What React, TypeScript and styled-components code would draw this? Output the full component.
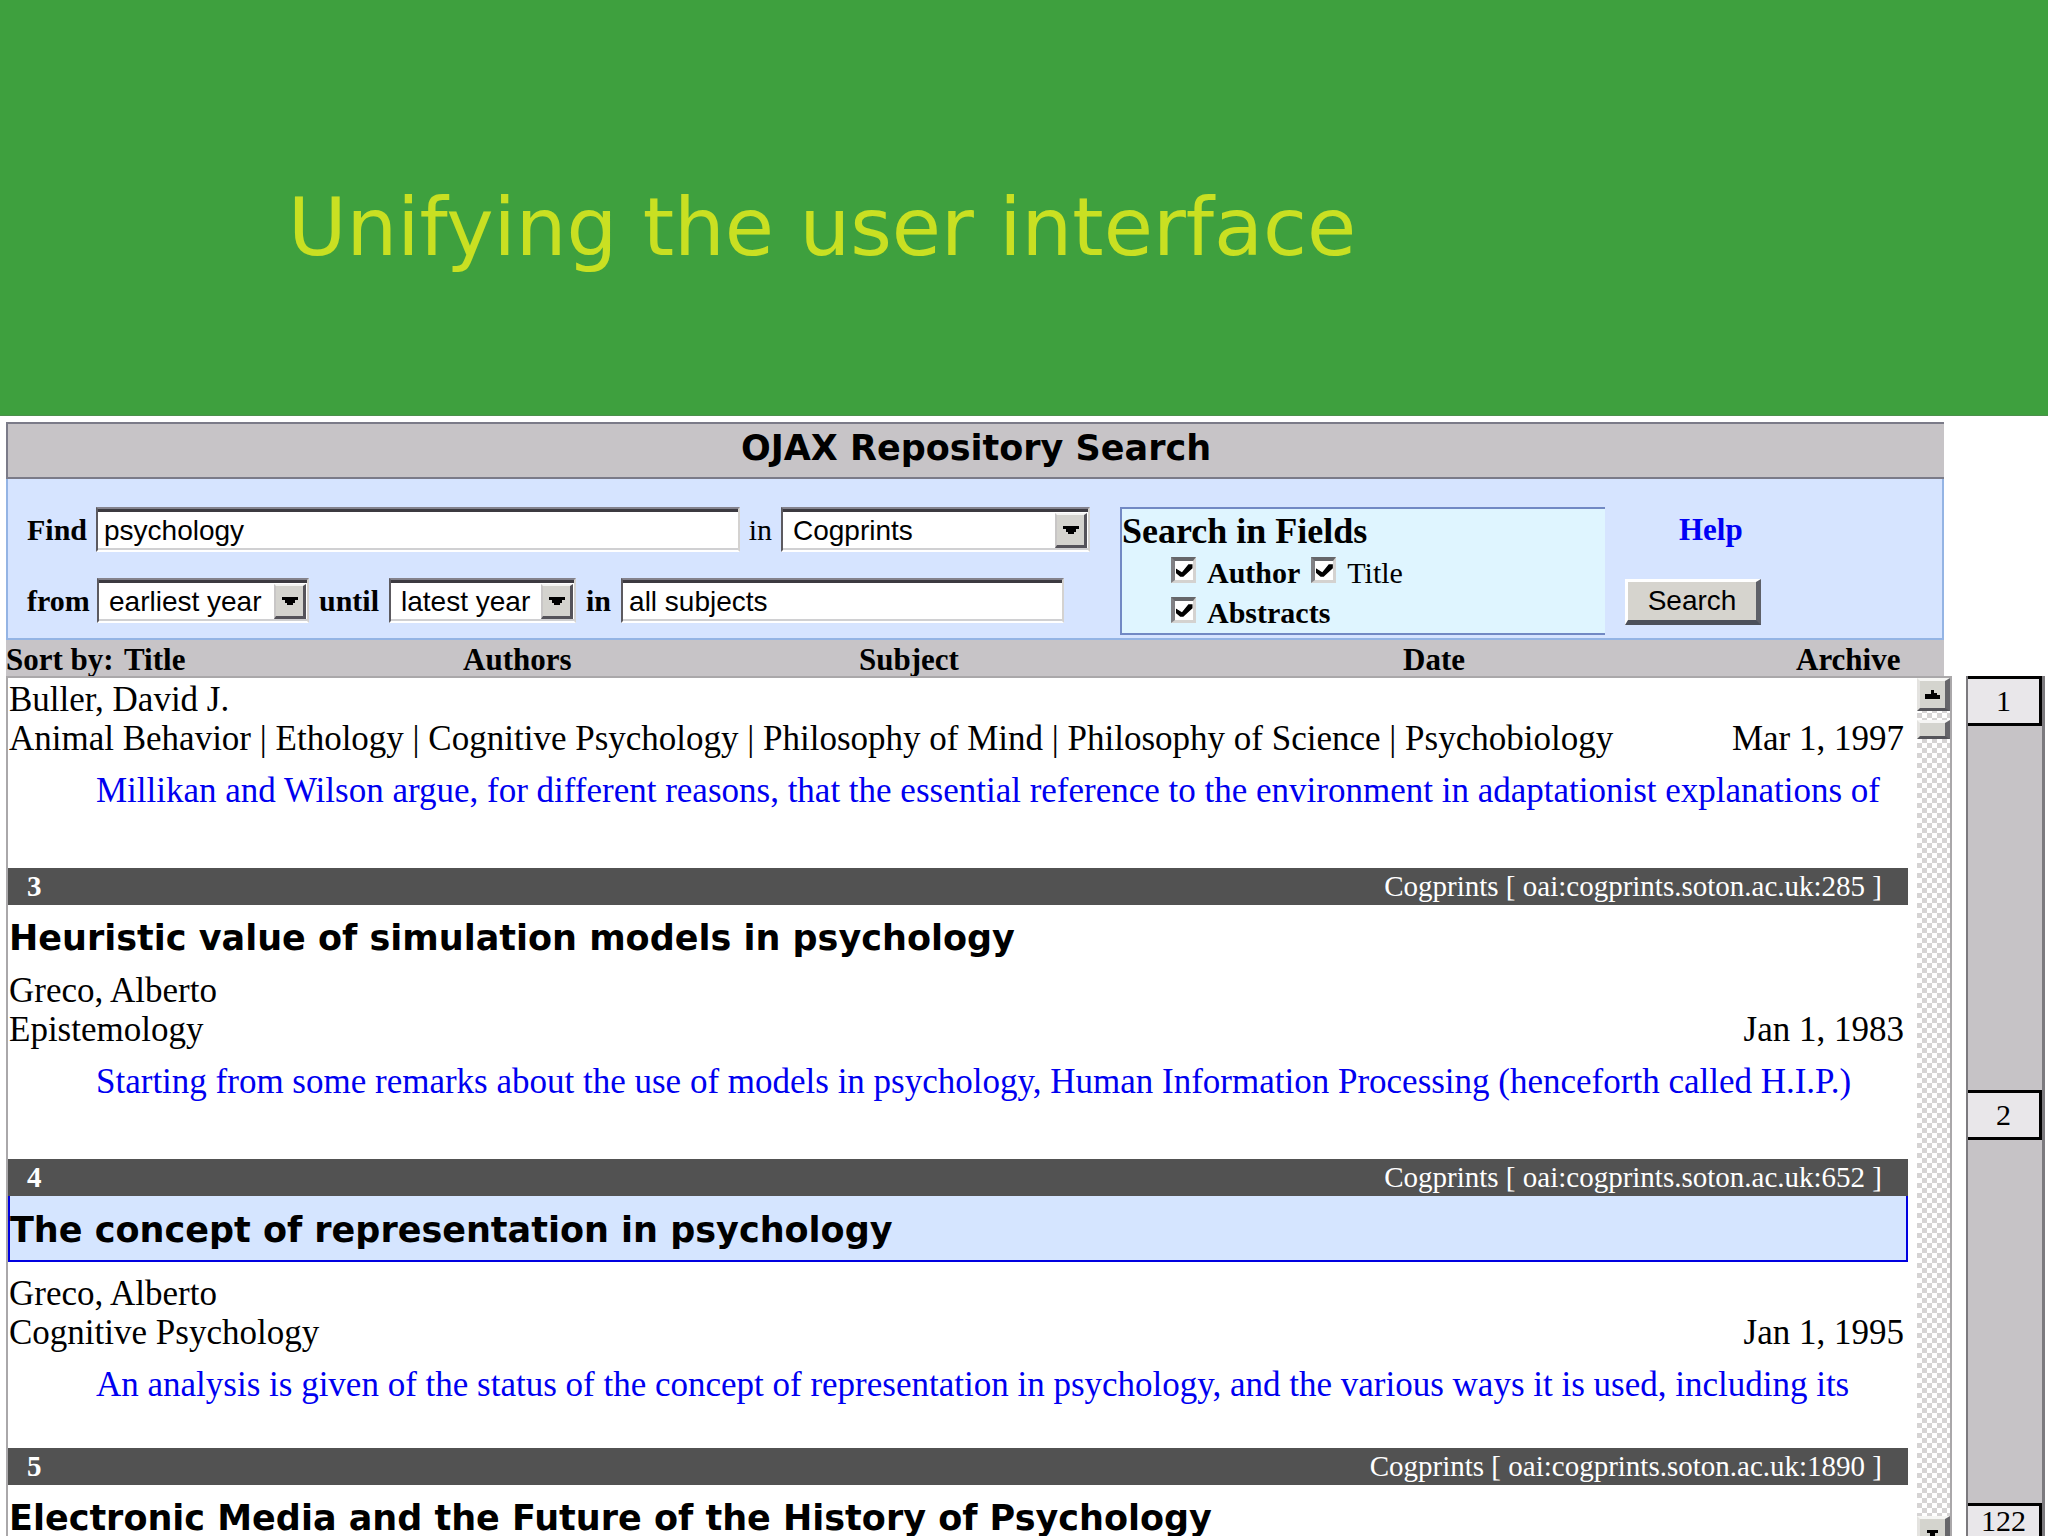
import React from 'react';
import styled, { createGlobalStyle, css } from 'styled-components';

const serif = '"Liberation Serif", "Times New Roman", serif';
const sans = '"Liberation Sans", Arial, sans-serif';
const wide = '"DejaVu Sans", Verdana, sans-serif';

const GlobalStyle = createGlobalStyle`
  *, *::before, *::after { box-sizing: border-box; }
  body { margin: 0; background: #fff; color: #000; font-family: ${serif}; }
  button, input, select { font: inherit; color: inherit; margin: 0; border-radius: 0; }
`;

const Page = styled.div`
  display: flex;
  flex-direction: column;
  height: 100vh;
  overflow: hidden;
`;

const Banner = styled.header`
  flex: none;
  height: 416px;
  padding: 176px 40px 0 288px;
  background: #3ea03e;
  border-bottom: 1px solid #4c8f4c;
`;

const BannerTitle = styled.h1`
  margin: 0;
  font: 400 80px/104px ${wide};
  color: #c9e022;
`;

const SearchArea = styled.section`
  flex: none;
  margin: 6px 104px 0 6px;
`;

const AppTitle = styled.h2`
  margin: 0;
  padding-bottom: 5px;
  border: solid #7b7b88;
  border-width: 2px 0 2px 2px;
  background: #c7c4c7;
  font: 700 35px/48px ${wide};
  text-align: center;
`;

const SearchForm = styled.form`
  display: flex;
  align-items: flex-start;
  padding-top: 28px;
  height: 161px;
  border: solid #94b4e4;
  border-width: 0 2px 2px;
  background: #d6e4ff;
`;

const Criteria = styled.div`
  flex: 1;
  display: flex;
  flex-direction: column;
  gap: 26px;
  padding: 0 30px 0 19px;
`;

const CriteriaRow = styled.div<{ $short?: boolean }>`
  display: flex;
  align-items: center;
  gap: ${(p) => (p.$short ? 10 : 9)}px;
  height: 45px;
  padding-right: ${(p) => (p.$short ? 26 : 0)}px;
`;

const Label = styled.label<{ $lead?: boolean; $light?: boolean }>`
  font-size: 30px;
  line-height: 40px;
  font-weight: ${(p) => (p.$light ? 400 : 700)};
  ${(p) => p.$lead && css`width: 60px;`}
`;

const sunken = css`
  height: 45px;
  border: 2px solid;
  border-color: #84828c #d4d2d0 #fff #5c5a60;
  background: #fff;
  box-shadow: inset 0 3px #3c3a40, inset 0 -2px #d0d0d2;
  font: 28px/36px ${sans};
  outline: none;
`;

const TextField = styled.input`
  ${sunken}
  flex: 1;
  min-width: 0;
  padding: 2px 6px 0;
`;

const SelectBox = styled.span<{ $width: number }>`
  position: relative;
  display: block;
  width: ${(p) => p.$width}px;
`;

const Select = styled.select`
  ${sunken}
  appearance: none;
  display: block;
  width: 100%;
  padding: 2px 36px 0 10px;
`;

const DropMark = styled.span`
  position: absolute;
  top: 6px;
  right: 3px;
  bottom: 4px;
  width: 32px;
  display: grid;
  place-items: center;
  border: solid;
  border-width: 2px 3px 3px 2px;
  border-color: #f4f4f2 #55535a #55535a #c8c6c6;
  background: #d4d3ce;
  pointer-events: none;
`;

const Fields = styled.fieldset`
  flex: none;
  width: 485px;
  margin: 0;
  padding: 0;
  border: solid #7289c4;
  border-width: 2px 0 2px 2px;
  background: #dff5ff;
`;

const FieldsLegend = styled.legend`
  float: left;
  width: 100%;
  padding: 0;
  font-size: 36px;
  font-weight: 700;
  line-height: 44px;
`;

const FieldsRow = styled.div`
  clear: both;
  display: flex;
  gap: 11px;
  height: 40px;
  padding-left: 49px;
`;

const Check = styled.input`
  appearance: none;
  flex: none;
  display: grid;
  place-items: center;
  width: 25px;
  height: 26px;
  margin-top: 4px;
  border: solid;
  border-width: 4px 3px 3px 4px;
  border-color: #66666a #d4d2d0 #d4d2d0 #808084;
  background: #fff;

  &:checked::before {
    content: '';
    width: 17px;
    height: 15px;
    background: #000;
    clip-path: polygon(0 35%, 38% 62%, 76% 8%, 100% 8%, 100% 35%, 46% 92%, 28% 92%, 0 65%);
  }
`;

const Actions = styled.div`
  flex: none;
  display: flex;
  flex-direction: column;
  align-items: flex-start;
  gap: 26px;
  width: 337px;
  padding-left: 20px;
`;

const HelpLink = styled.a`
  margin-left: 54px;
  font-size: 31px;
  font-weight: 700;
  line-height: 46px;
  color: #0000f5;
  text-decoration: none;
`;

const SearchButton = styled.button`
  width: 136px;
  height: 46px;
  padding: 0;
  border: solid;
  border-width: 3px 5px 5px 3px;
  border-color: #fff #5e6068 #4c505a #fff;
  background: #d6d4ce;
  font: 28px/32px ${sans};
`;

const SortBar = styled.nav`
  display: grid;
  grid-template-columns: 118fr 339fr 396fr 544fr 393fr 148fr;
  height: 36px;
  background: #c7c4c7;
  font-size: 31px;
  font-weight: 700;
  line-height: 40px;
`;

const SortButton = styled.button`
  padding: 0;
  border: 0;
  background: none;
  text-align: left;
`;

const Body = styled.div`
  flex: 1;
  min-height: 0;
  display: flex;
  margin: 0 3px 0 6px;
`;

const Viewport = styled.main`
  flex: 1;
  min-width: 0;
  display: flex;
  gap: 9px;
  border: solid #aaa8aa;
  border-width: 2px 2px 0;
  overflow: hidden;
`;

const Results = styled.div`
  flex: 1;
  min-width: 0;
  padding-top: 2px;
`;

const Record = styled.article`
  white-space: nowrap;
`;

const RecordBar = styled.div`
  display: flex;
  justify-content: space-between;
  padding: 0 26px 0 19px;
  background: #525252;
  color: #fff;
  font-size: 29px;
  line-height: 37px;
`;

const RecordTitle = styled.h3<{ $active?: boolean }>`
  margin: 0;
  padding: 3px 1px;
  font: 700 35px/60px ${wide};
  ${(p) =>
    p.$active &&
    css`
      margin-bottom: 12px;
      padding: 4px 0 0;
      border: solid #0000e0;
      border-width: 0 2px 2px;
      background: #d5e5ff;
    `}
`;

const Meta = styled.div`
  display: flex;
  justify-content: space-between;
  padding: 0 4px 0 1px;
  font-size: 35px;
  line-height: 39px;
`;

const Abstract = styled.p<{ $active?: boolean }>`
  margin: 13px 0 0;
  padding: 0 0 ${(p) => (p.$active ? 44 : 58)}px 88px;
  font-size: 35px;
  line-height: 39px;
  color: #0000f0;
`;

const Scrollbar = styled.div`
  flex: none;
  display: flex;
  flex-direction: column;
  width: 33px;
  background: repeating-conic-gradient(#d6d4d4 0 25%, #fff 0 50%) 0 0 / 10px 10px;
`;

const raised = css`
  display: grid;
  place-items: center;
  width: 100%;
  padding: 0;
  border: solid;
  border-width: 3px 5px 3px 3px;
  border-color: #f6f6f4 #66666a #55555a #e4e3e0;
  background: #d4d4ce;
`;

const ArrowButton = styled.button<{ $last?: boolean }>`
  ${raised}
  height: ${(p) => (p.$last ? 20 : 33)}px;
  ${(p) => p.$last && css`margin-top: auto; border-bottom-width: 0; place-items: end center;`}
`;

const Thumb = styled.div`
  ${raised}
  height: 19px;
  margin-top: 9px;
`;

const Pager = styled.nav`
  flex: none;
  display: flex;
  flex-direction: column;
  justify-content: space-between;
  width: 79px;
  margin-left: 14px;
  border: solid;
  border-width: 0 3px 0 2px;
  border-color: #8c8a8e #7c7a7e;
  background: #c6c3c6;
`;

const PageButton = styled.button<{ $last?: boolean }>`
  height: 50px;
  padding: 0;
  border: solid #000;
  border-width: 3px 3px 3px 0;
  background: #e9e7ea;
  font: 30px/40px ${serif};
  ${(p) => p.$last && css`height: 33px; border-bottom: 0; line-height: 30px;`}
`;

type RecordData = {
  no?: number;
  source?: string;
  title?: string;
  author?: string;
  subject?: string;
  date?: string;
  abstract?: string;
  active?: boolean;
};

const records: RecordData[] = [
  {
    author: 'Buller, David J.',
    subject:
      'Animal Behavior | Ethology | Cognitive Psychology | Philosophy of Mind | Philosophy of Science | Psychobiology',
    date: 'Mar 1, 1997',
    abstract:
      'Millikan and Wilson argue, for different reasons, that the essential reference to the environment in adaptationist explanations of',
  },
  {
    no: 3,
    source: 'Cogprints [ oai:cogprints.soton.ac.uk:285 ]',
    title: 'Heuristic value of simulation models in psychology',
    author: 'Greco, Alberto',
    subject: 'Epistemology',
    date: 'Jan 1, 1983',
    abstract:
      'Starting from some remarks about the use of models in psychology, Human Information Processing (henceforth called H.I.P.)',
  },
  {
    no: 4,
    source: 'Cogprints [ oai:cogprints.soton.ac.uk:652 ]',
    title: 'The concept of representation in psychology',
    author: 'Greco, Alberto',
    subject: 'Cognitive Psychology',
    date: 'Jan 1, 1995',
    abstract:
      'An analysis is given of the status of the concept of representation in psychology, and the various ways it is used, including its',
    active: true,
  },
  {
    no: 5,
    source: 'Cogprints [ oai:cogprints.soton.ac.uk:1890 ]',
    title: 'Electronic Media and the Future of the History of Psychology',
  },
];

function DropDown({ id, value, width }: { id: string; value: string; width: number }) {
  return (
    <SelectBox $width={width}>
      <Select id={id} defaultValue={value}>
        <option>{value}</option>
      </Select>
      <DropMark>
        <svg width="16" height="8" viewBox="0 0 16 8" aria-hidden="true">
          <path d="M0 0H16V3H13V6H11V8H5V6H3V3H0Z" />
        </svg>
      </DropMark>
    </SelectBox>
  );
}

export default function App() {
  return (
    <Page>
      <GlobalStyle />
      <Banner>
        <BannerTitle>Unifying the user interface</BannerTitle>
      </Banner>

      <SearchArea>
        <AppTitle>OJAX Repository Search</AppTitle>
        <SearchForm onSubmit={(e) => e.preventDefault()}>
          <Criteria>
            <CriteriaRow>
              <Label $lead htmlFor="find">Find</Label>
              <TextField id="find" defaultValue="psychology" />
              <Label $light htmlFor="archive">in</Label>
              <DropDown id="archive" value="Cogprints" width={309} />
            </CriteriaRow>
            <CriteriaRow $short>
              <Label $lead htmlFor="from">from</Label>
              <DropDown id="from" value="earliest year" width={212} />
              <Label htmlFor="until">until</Label>
              <DropDown id="until" value="latest year" width={187} />
              <Label htmlFor="subject">in</Label>
              <TextField id="subject" defaultValue="all subjects" />
            </CriteriaRow>
          </Criteria>

          <Fields>
            <FieldsLegend>Search in Fields</FieldsLegend>
            <FieldsRow>
              <Check type="checkbox" id="f-author" defaultChecked />
              <Label htmlFor="f-author">Author</Label>
              <Check type="checkbox" id="f-title" defaultChecked />
              <Label $light htmlFor="f-title">Title</Label>
            </FieldsRow>
            <FieldsRow>
              <Check type="checkbox" id="f-abstracts" defaultChecked />
              <Label htmlFor="f-abstracts">Abstracts</Label>
            </FieldsRow>
          </Fields>

          <Actions>
            <HelpLink href="#help">Help</HelpLink>
            <SearchButton type="submit">Search</SearchButton>
          </Actions>
        </SearchForm>
        <SortBar aria-label="Sort">
          <span>Sort by:</span>
          <SortButton type="button">Title</SortButton>
          <SortButton type="button">Authors</SortButton>
          <SortButton type="button">Subject</SortButton>
          <SortButton type="button">Date</SortButton>
          <SortButton type="button">Archive</SortButton>
        </SortBar>
      </SearchArea>

      <Body>
        <Viewport>
          <Results>
            {records.map((r) => (
              <Record key={r.title ?? r.author}>
                {r.no && (
                  <RecordBar>
                    <b>{r.no}</b>
                    <span>{r.source}</span>
                  </RecordBar>
                )}
                {r.title && <RecordTitle $active={r.active}>{r.title}</RecordTitle>}
                {r.author && <Meta>{r.author}</Meta>}
                {r.subject && (
                  <Meta>
                    <span>{r.subject}</span>
                    <time>{r.date}</time>
                  </Meta>
                )}
                {r.abstract && <Abstract $active={r.active}>{r.abstract}</Abstract>}
              </Record>
            ))}
          </Results>
          <Scrollbar>
            <ArrowButton type="button" aria-label="Scroll up">
              <svg width="15" height="9" viewBox="0 0 15 9" aria-hidden="true">
                <path d="M6 0H9V3H12V5H15V9H0V4H6Z" />
              </svg>
            </ArrowButton>
            <Thumb />
            <ArrowButton type="button" aria-label="Scroll down" $last>
              <svg width="11" height="6" viewBox="0 0 11 6" aria-hidden="true">
                <path d="M0 0H11V3H8V6H3V3H0Z" />
              </svg>
            </ArrowButton>
          </Scrollbar>
        </Viewport>
        <Pager aria-label="Pages">
          <PageButton type="button">1</PageButton>
          <PageButton type="button">2</PageButton>
          <PageButton type="button" $last>122</PageButton>
        </Pager>
      </Body>
    </Page>
  );
}
